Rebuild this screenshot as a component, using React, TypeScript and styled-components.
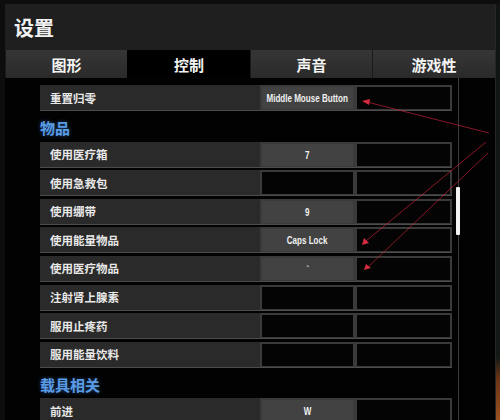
import styled, { createGlobalStyle } from "styled-components";

const GlobalStyle = createGlobalStyle`
  body {
    margin: 0;
    background: #0e0f0e;
    font-family: "Noto Sans CJK SC", "Noto Sans", sans-serif;
  }
`;

interface Binding {
  label: string;
  primary?: string;
  secondary?: string;
}

interface Group {
  title?: string;
  items: Binding[];
}

const groups: Group[] = [
  { items: [{ label: "重置归零", primary: "Middle Mouse Button" }] },
  {
    title: "物品",
    items: [
      { label: "使用医疗箱", primary: "7" },
      { label: "使用急救包" },
      { label: "使用绷带", primary: "9" },
      { label: "使用能量物品", primary: "Caps Lock" },
      { label: "使用医疗物品", primary: "`" },
      { label: "注射肾上腺素" },
      { label: "服用止疼药" },
      { label: "服用能量饮料" },
    ],
  },
  { title: "载具相关", items: [{ label: "前进", primary: "W" }] },
];

const tabs = ["图形", "控制", "声音", "游戏性"];

const Page = styled.div`
  position: relative;
  display: flex;
  height: 420px;
  padding: 4px 0 0 5px;
  box-sizing: border-box;
  overflow: hidden;
  background: #0d0d0d;
`;

const Panel = styled.div`
  width: 490px;
  display: flex;
  flex-direction: column;
`;

const TitleBar = styled.div`
  height: 46px;
  display: flex;
  align-items: center;
  padding-left: 9px;
  background: #1f1f1f;
  color: #f2f2f2;
  font-size: 20px;
  font-weight: 700;
`;

const TabRow = styled.div`
  display: grid;
  grid-template-columns: 122px 123px 122px 123px;
  height: 28px;
`;

const Tab = styled.div<{ $active?: boolean }>`
  display: flex;
  align-items: center;
  justify-content: center;
  color: #f4f4f4;
  font-size: 15px;
  font-weight: 700;
  background: ${(p) =>
    p.$active ? "#000" : "linear-gradient(#363636, #2a2a2a)"};
  border-left: 1px solid ${(p) => (p.$active ? "#000" : "#1a1a1a")};
`;

const Content = styled.div`
  flex: 1;
  display: flex;
  background: #020202;
  min-height: 0;
`;

const List = styled.div`
  width: 412px;
  padding: 7px 0 0 35px;
  display: flex;
  flex-direction: column;
`;

const GroupTitle = styled.div`
  height: 28px;
  display: flex;
  align-items: center;
  color: #5a9be6;
  font-size: 15px;
  font-weight: 700;
  text-shadow: 0 0 4px rgba(70, 140, 230, 0.5);
`;

const Row = styled.div`
  display: grid;
  grid-template-columns: 220px 95px 97px;
  height: 26px;
  margin-bottom: 2.6px;
  background: #2a2a2a;
  border-bottom: 1px solid #4c4c4c;
  box-sizing: border-box;
`;

const Label = styled.div`
  display: flex;
  align-items: center;
  padding-left: 10px;
  color: #e8e8e8;
  font-size: 11.5px;
  font-weight: 700;
`;

const KeyCell = styled.div<{ $filled?: boolean }>`
  display: flex;
  align-items: center;
  justify-content: center;
  overflow: hidden;
  border: 2px solid #3a3a3a;
  border-bottom-width: 1px;
  background: ${(p) => (p.$filled ? "#424242" : "#040404")};
`;

const KeyText = styled.span`
  display: inline-block;
  color: #f0f0f0;
  font-family: "Liberation Sans", Arial, sans-serif;
  font-size: 11.5px;
  font-weight: 700;
  white-space: nowrap;
  transform: scaleX(0.7);
`;

const ScrollTrack = styled.div`
  position: relative;
  width: 4px;
  margin-left: 4px;
  display: flex;
  justify-content: center;
  &::before {
    content: "";
    width: 1px;
    background: #3c3c3c;
  }
`;

const Thumb = styled.div`
  position: absolute;
  top: 109px;
  left: 0;
  width: 4px;
  height: 48px;
  background: #f2f2f2;
  border-radius: 1px;
`;

const PanelEdge = styled.div`
  flex: 1;
  border-left: 1px solid #262626;
  background: linear-gradient(
    #101512 0%,
    #141a16 85%,
    #6a3414 90%,
    #9a5220 100%
  );
`;

const Arrows = styled.svg`
  position: absolute;
  inset: 0;
  pointer-events: none;
`;

export default function App() {
  return (
    <>
      <GlobalStyle />
      <Page>
        <Panel>
          <TitleBar>设置</TitleBar>
          <TabRow>
            {tabs.map((t, i) => (
              <Tab key={t} $active={i === 1}>
                {t}
              </Tab>
            ))}
          </TabRow>
          <Content>
            <List>
              {groups.map((g, gi) => (
                <div key={gi}>
                  {g.title && <GroupTitle>{g.title}</GroupTitle>}
                  {g.items.map((b) => (
                    <Row key={b.label}>
                      <Label>{b.label}</Label>
                      <KeyCell $filled={!!b.primary}>
                        {b.primary && <KeyText>{b.primary}</KeyText>}
                      </KeyCell>
                      <KeyCell $filled={!!b.secondary}>
                        {b.secondary && <KeyText>{b.secondary}</KeyText>}
                      </KeyCell>
                    </Row>
                  ))}
                </div>
              ))}
            </List>
            <ScrollTrack>
              <Thumb />
            </ScrollTrack>
          </Content>
        </Panel>
        <PanelEdge />
        <Arrows width="500" height="420" viewBox="0 0 500 420">
          <g stroke="rgba(205,35,55,0.65)" strokeWidth="1" fill="none">
            <line x1="489" y1="133" x2="367" y2="102" />
            <line x1="486" y1="142" x2="366" y2="241" />
            <line x1="488" y1="153" x2="368" y2="267" />
          </g>
          <g fill="#d42a40">
            <polygon points="362,101 370,99 369,105" />
            <polygon points="362,245 364,238 369,243" />
            <polygon points="364,270 366,264 371,268" />
          </g>
        </Arrows>
      </Page>
    </>
  );
}
